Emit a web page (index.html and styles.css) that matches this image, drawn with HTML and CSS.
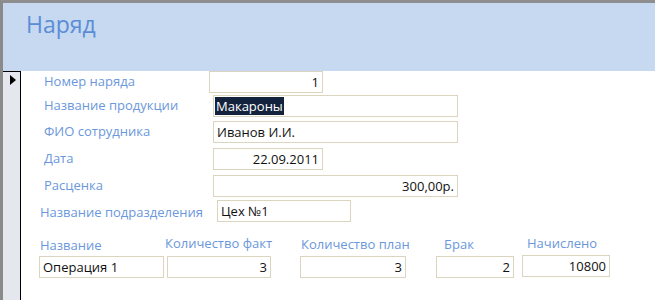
FILE: index.html
```html
<!DOCTYPE html>
<html lang="ru">
<head>
  <meta charset="UTF-8">
  <title>Наряд</title>
  <link rel="stylesheet" href="styles.css">
</head>
<body>
  <div class="frame">
    <!-- Заголовок формы -->
    <div class="form-header">
      <h1>Наряд</h1>
    </div>

    <div class="form-body">
      <!-- Область выделения записи -->
      <div class="selector">
        <span class="arrow"></span>
      </div>

      <!-- Поля формы -->
      <div class="detail">
        <div class="row row-1">
          <span class="label">Номер наряда</span>
          <span class="field field-short num">1</span>
        </div>
        <div class="row row-2">
          <span class="label">Название продукции</span>
          <span class="field field-long"><span class="selected">Макароны</span></span>
        </div>
        <div class="row row-3">
          <span class="label">ФИО сотрудника</span>
          <span class="field field-long">Иванов И.И.</span>
        </div>
        <div class="row row-4">
          <span class="label">Дата</span>
          <span class="field field-date num">22.09.2011</span>
        </div>
        <div class="row row-5">
          <span class="label">Расценка</span>
          <span class="field field-long num">300,00р.</span>
        </div>
        <div class="row row-6">
          <span class="label">Название подразделения</span>
          <span class="field field-dept">Цех №1</span>
        </div>

        <!-- Подчиненная форма операций -->
        <div class="subform">
          <div class="col col-name">
            <span class="label">Название</span>
            <span class="field">Операция 1</span>
          </div>
          <div class="col col-fact">
            <span class="label">Количество факт</span>
            <span class="field num">3</span>
          </div>
          <div class="col col-plan">
            <span class="label">Количество план</span>
            <span class="field num">3</span>
          </div>
          <div class="col col-brak">
            <span class="label">Брак</span>
            <span class="field num">2</span>
          </div>
          <div class="col col-sum">
            <span class="label">Начислено</span>
            <span class="field num">10800</span>
          </div>
        </div>
      </div>
    </div>
  </div>
</body>
</html>
```

FILE: styles.css
```css
/* Сброс */
* {
  margin: 0;
  padding: 0;
  box-sizing: border-box;
}
body {
  font-family: 'Open Sans', 'Noto Sans', sans-serif;
  font-size: 13px;
  background: #fff;
  color: #1a1a1a;
  overflow: hidden;
  height: 300px;
}
/* Рамка окна формы */
.frame {
  height: 300px;
  border-top: 3px solid #8e8e8e;
  border-left: 3px solid #8a8a8a;
  display: flex;
  flex-direction: column;
}
/* Заголовок */
.form-header {
  height: 68px;
  background: #c6d9f0;
  padding: 8px 0 0 23px;
}
.form-header h1 {
  font-size: 23px;
  font-weight: normal;
  line-height: 26px;
  color: #5b8dd6;
}
/* Тело формы */
.form-body {
  flex: 1;
  display: flex;
}
.selector {
  width: 18px;
  background: #e4e8ee;
  border-top: 1px solid #000;
  border-right: 1px solid #000;
  padding: 3px 0 0 7px;
}
.arrow {
  display: block;
  width: 0;
  height: 0;
  border-top: 5.5px solid transparent;
  border-bottom: 5.5px solid transparent;
  border-left: 6px solid #000;
}
.detail {
  flex: 1;
}
/* Строки полей */
.row {
  display: flex;
  align-items: center;
  height: 22px;
  padding-left: 23px;
}
.label {
  color: #6b97dc;
  white-space: nowrap;
  line-height: 18px;
}
.row .label {
  width: 169px;
  margin-top: -3px;
}
.field {
  display: block;
  height: 22px;
  border: 1px solid #dbd5bf;
  padding: 0 3px;
  line-height: 20px;
  color: #111;
  white-space: nowrap;
  overflow: hidden;
}
.num {
  text-align: right;
}
.field-short { width: 114px; margin-left: -4px; }
.field-long  { width: 245px; }
.field-date  { width: 110px; }
.field-dept  { width: 134px; }
.row-2 { margin-top: 2px; }
.row-3 { margin-top: 4px; }
.row-4 { margin-top: 5px; }
.row-5 { margin-top: 5px; }
.row-6 { margin-top: 3px; padding-left: 19px; }
.row-6 .label { width: 177px; margin-top: 2px; }
.row-2 .field { padding-left: 1px; }
.selected {
  display: inline-block;
  background: #13233d;
  color: #fff;
  line-height: 18px;
  padding: 0 1px;
  margin-top: 1px;
}
/* Подчиненная форма */
.subform {
  display: flex;
  margin-top: 12px;
  padding-left: 18px;
}
.col {
  display: flex;
  flex-direction: column;
  flex: none;
}
.col .label {
  height: 22px;
}
.col-name { width: 126px; }
.col-name .label { padding-left: 1px; margin-top: 2px; }
.col-name .field { width: 125px; margin-top: -2px; }
.col-fact { width: 135px; }
.col-fact .field { width: 104px; margin-left: 2px; }
.col-plan { width: 136px; }
.col-plan .label { padding-left: 1px; margin-top: 1px; }
.col-plan .field { width: 106px; margin-top: -1px; }
.col-brak { width: 86px; }
.col-brak .label { padding-left: 8px; margin-top: 1px; }
.col-brak .field { width: 78px; margin-top: -1px; }
.col-sum { width: 88px; }
.col-sum .label { padding-left: 5px; }
.col-sum .field { width: 88px; margin-top: -1px; }
```
